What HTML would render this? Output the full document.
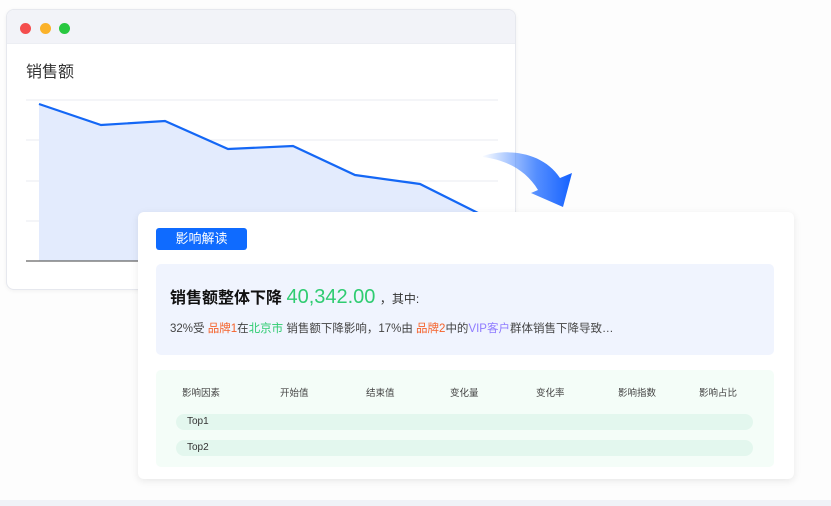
<!DOCTYPE html>
<html><head><meta charset="utf-8"><style>
*{margin:0;padding:0;box-sizing:border-box}
body{width:831px;height:506px;background:#fdfdfd;position:relative;overflow:hidden;font-family:"Liberation Sans","Noto Sans CJK SC",sans-serif}
.win{position:absolute;left:6px;top:9px;width:510px;height:281px;background:#fff;border:1px solid #e6e8ee;border-radius:8px;overflow:hidden;box-shadow:0 1px 4px rgba(0,0,0,.05)}
.bar{height:34px;background:#f2f3f8;border-bottom:1px solid #eceef3}
.dot{position:absolute;top:13px;width:11px;height:11px;border-radius:50%}
.t1{position:absolute;left:19px;top:48px;font-size:16px;color:#333}
.card{position:absolute;left:138px;top:212px;width:656px;height:267px;background:#fff;border-radius:6px;box-shadow:0 2px 8px rgba(0,0,0,.09)}
.btn{position:absolute;left:18px;top:16px;width:91px;height:22px;background:#0f6bff;border-radius:3px;color:#fff;font-size:13px;text-align:center;line-height:22px}
.sum{position:absolute;left:18px;top:52px;width:618px;height:91px;background:#f0f4fe;border-radius:5px}
.h{position:absolute;left:14px;top:20px;font-size:16px;font-weight:bold;color:#111;white-space:nowrap}
.h .n{color:#2fcc71;font-size:20px;font-weight:normal}
.h .s{font-size:12px;font-weight:normal;color:#333}
.p{position:absolute;left:14px;top:56px;font-size:11.5px;color:#444;white-space:nowrap}
.o{color:#f5622a}.g{color:#2fcc71}.v{color:#8f7bff}
.tb{position:absolute;left:18px;top:158px;width:618px;height:97px;background:#f4fdf8;border-radius:5px}
.th{position:absolute;top:15px;font-size:9.5px;color:#444}
.row{position:absolute;left:20px;width:577px;height:16px;background:#e3f7ee;border-radius:8px;font-size:10px;color:#333;line-height:16px;padding-left:11px}
</style></head><body>
<div class="win"><div class="bar"></div>
<div class="dot" style="left:13px;background:#f44d4d"></div>
<div class="dot" style="left:33px;background:#fbb22a"></div>
<div class="dot" style="left:52px;background:#28c840"></div>
<div class="t1">销售额</div>
<svg style="position:absolute;left:0;top:0" width="510" height="281">
<g stroke="#e8ebf0" stroke-width="1"><line x1="19" y1="90" x2="491" y2="90"/><line x1="19" y1="130" x2="491" y2="130"/><line x1="19" y1="171" x2="491" y2="171"/><line x1="19" y1="211" x2="491" y2="211"/></g>
<polygon points="32,94 94,115 158,111 221,139 286,136 348,165 413,174 471,203 471,251 32,251" fill="#e3ebfd"/>
<polyline points="32,94 94,115 158,111 221,139 286,136 348,165 413,174 471,203" fill="none" stroke="#1467f5" stroke-width="2.2"/>
<line x1="19" y1="251" x2="491" y2="251" stroke="#666" stroke-width="1.2"/>
</svg></div>
<svg style="position:absolute;left:478px;top:140px" width="100" height="72">
<defs><linearGradient id="a" x1="0" y1="0" x2="1" y2="0"><stop offset="0" stop-color="#2a74ff" stop-opacity="0.03"/><stop offset="0.6" stop-color="#2a72ff" stop-opacity="0.8"/><stop offset="1" stop-color="#1461ff"/></linearGradient></defs>
<path d="M5,16 C30,8 65,12 82,38 L94,33 L85,67 L53,53 L60,50 C48,30 28,20 5,17 Z" fill="url(#a)"/>
</svg>
<div class="card">
<div class="btn">影响解读</div>
<div class="sum">
<div class="h">销售额整体下降 <span class="n">40,342.00</span> <span class="s">，其中:</span></div>
<div class="p">32%受 <span class="o">品牌1</span>在<span class="g">北京市</span> 销售额下降影响，17%由 <span class="o">品牌2</span>中的<span class="v">VIP客户</span>群体销售下降导致…</div>
</div>
<div class="tb">
<div class="th" style="left:26px">影响因素</div>
<div class="th" style="left:124px">开始值</div>
<div class="th" style="left:210px">结束值</div>
<div class="th" style="left:294px">变化量</div>
<div class="th" style="left:380px">变化率</div>
<div class="th" style="left:462px">影响指数</div>
<div class="th" style="left:543px">影响占比</div>
<div class="row" style="top:44px">Top1</div>
<div class="row" style="top:70px">Top2</div>
</div></div>
<div style="position:absolute;left:0;top:500px;width:831px;height:6px;background:#f0f2f7"></div>
</body></html>
